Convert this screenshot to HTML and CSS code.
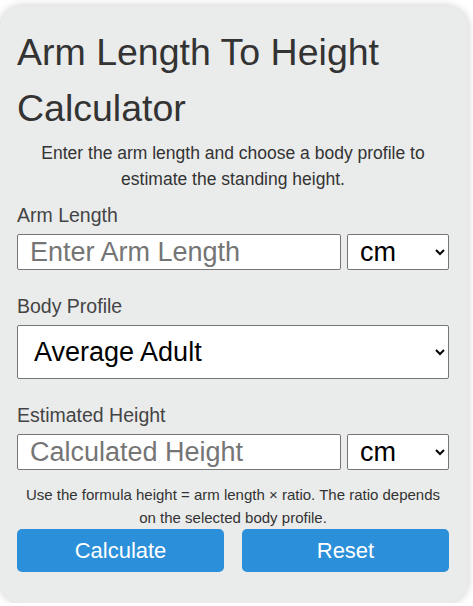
FILE: index.html
```html
<!DOCTYPE html>
<html lang="en">
<head>
  <meta charset="utf-8">
  <title>Arm Length To Height Calculator</title>
  <meta name="viewport" content="width=device-width, initial-scale=1.0">
  <link rel="stylesheet" href="styles.css">
</head>
<body>
<main class="calculator">
  <h1>Arm Length To Height Calculator</h1>
  <p class="intro">Enter the arm length and choose a body profile to estimate the standing height.</p>

  <label class="field-label" for="arm-length">Arm Length</label>
  <div class="field-row">
    <input id="arm-length" type="text" placeholder="Enter Arm Length">
    <select id="arm-unit">
      <option>cm</option>
      <option>in</option>
    </select>
  </div>

  <label class="field-label" for="profile">Body Profile</label>
  <div class="field-row">
    <select id="profile" class="wide">
      <option>Average Adult</option>
      <option>Athletic Build</option>
      <option>Child</option>
    </select>
  </div>

  <label class="field-label" for="height">Estimated Height</label>
  <div class="field-row result-row">
    <input id="height" type="text" placeholder="Calculated Height" readonly>
    <select id="height-unit">
      <option>cm</option>
      <option>in</option>
    </select>
  </div>

  <p class="note">Use the formula height = arm length × ratio. The ratio depends on the selected body profile.</p>

  <div class="actions">
    <button type="button">Calculate</button>
    <button type="button">Reset</button>
  </div>
</main>
</body>
</html>
```

FILE: styles.css
```css
html {
  box-sizing: border-box;
}

*, *:before, *:after {
  box-sizing: inherit;
}

body {
  margin: 0;
  background: #fff;
  font-family: 'Liberation Sans', Arial, sans-serif;
  color: #333;
}

.calculator {
  width: 468px;
  margin: 6px 0 0 0;
  padding: 19px 19px 31px 17px;
  background: #eaebeb;
  border-radius: 22px;
  box-shadow: 0 0 8px rgba(0, 0, 0, 0.22);
  display: flex;
  flex-direction: column;
}

h1 {
  margin: 0;
  font-size: 37.5px;
  font-weight: 400;
  line-height: 55.5px;
  color: #333;
}

.intro {
  margin: 4px 0 12px;
  font-size: 17.5px;
  line-height: 26px;
  text-align: center;
  color: #333;
}

.field-label {
  display: block;
  font-size: 19.5px;
  line-height: 22.5px;
  color: #444;
  margin-bottom: 7.5px;
}

.field-row {
  display: flex;
  gap: 6px;
  margin-bottom: 25px;
}

.field-row.result-row {
  margin-bottom: 0;
}

input, select {
  font-family: 'Liberation Sans', Arial, sans-serif;
  font-size: 27px;
  border: 1px solid #767676;
  border-radius: 2px;
  background: #fff;
  color: #000;
}

input {
  flex: 1;
  min-width: 0;
  height: 36px;
  padding: 0 12px;
}

input::placeholder {
  color: #757575;
}

select {
  width: 102px;
  height: 36px;
  padding: 0 8px;
}

select.wide {
  width: 100%;
  height: 54px;
  padding: 0 12px;
}

.note {
  margin: 14px 0 0;
  font-size: 15px;
  line-height: 22.5px;
  text-align: center;
  color: #333;
}

.actions {
  display: flex;
  gap: 18px;
}

.actions button {
  flex: 1;
  height: 43px;
  border: none;
  border-radius: 5px;
  background: #2b90d9;
  color: #fff;
  font-family: 'Liberation Sans', Arial, sans-serif;
  font-size: 22px;
  cursor: pointer;
}
```
